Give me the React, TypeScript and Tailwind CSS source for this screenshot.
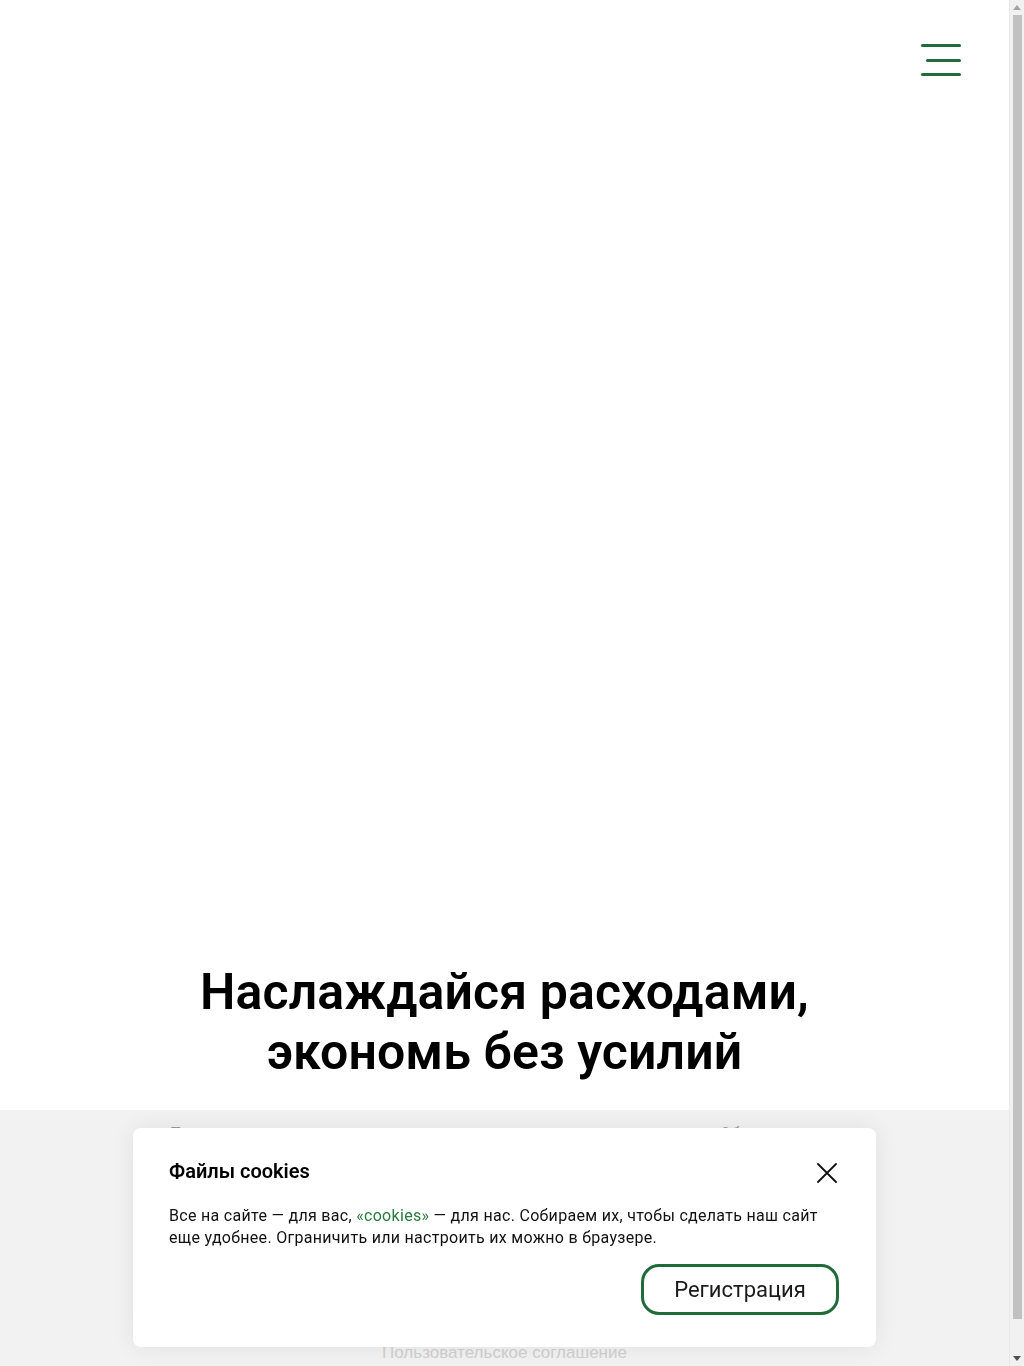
export default function App() {
  return (
    <div className="min-h-[1400px] w-[1009px] bg-white font-['Roboto','Noto_Sans',sans-serif] text-black">
      {/* Шапка */}
      <header className="flex h-[120px] justify-end pr-[48px] pt-[44px]">
        <button type="button" className="flex h-[32px] w-[40px] flex-col items-end justify-between">
          <span className="h-[3px] w-[40px] rounded-full bg-[#1f6b3a]" />
          <span className="h-[3px] w-[35px] rounded-full bg-[#1f6b3a]" />
          <span className="h-[3px] w-[40px] rounded-full bg-[#1f6b3a]" />
        </button>
      </header>

      {/* Промо */}
      <div className="h-[842px]" />
      <h1 className="pb-[28px] text-center text-[50px] leading-[60px] font-semibold tracking-[0.1px]">
        Наслаждайся расходами,
        <br />
        экономь без усилий
      </h1>

      {/* Подвал */}
      <footer className="h-[290px] bg-[#f2f2f2] pt-[12px]">
        <div className="flex pl-[170px] text-[16px] text-[#999]">
          <p className="w-[550px]">Продукты</p>
          <p>Обратная связь</p>
        </div>
        <p className="mt-[197px] text-center font-['Liberation_Sans',sans-serif] text-[17px] leading-[20px] text-[#d0d0d0]">
          Пользовательское соглашение
        </p>
      </footer>

      {/* Баннер cookies */}
      <div className="fixed bottom-[19px] left-[133px] flex h-[219px] w-[743px] flex-col rounded-lg bg-white pl-[36px] pr-[37px] pt-[29px] shadow-[0_0_24px_rgba(0,0,0,0.08)]">
        <div className="flex items-center justify-between">
          <h2 className="text-[20px] leading-[28px] font-semibold">Файлы cookies</h2>
          <svg className="mr-[2px] mt-[4px] h-[20px] w-[20px] text-[#111]" viewBox="0 0 20 20" fill="none" stroke="currentColor" strokeWidth={1.8} strokeLinecap="round">
            <path d="M1 1l18 18M19 1L1 19" />
          </svg>
        </div>
        <p className="mt-[20px] text-[16px] leading-[22px] tracking-[0.3px] text-[#111]">
          Все на сайте — для вас, <span className="text-[#2a7a3c]">«cookies»</span> — для нас. Собираем их, чтобы сделать наш сайт
          еще удобнее. Ограничить или настроить их можно в браузере.
        </p>
        <div className="mt-[15px] flex justify-end">
          <button
            type="button"
            className="h-[51px] w-[198px] rounded-[18px] border-[3px] border-[#1f6b3a] text-[22px] text-[#1a1a1a]"
          >
            Регистрация
          </button>
        </div>
      </div>

      {/* Полоса прокрутки */}
      <div className="fixed right-0 top-0 flex h-[1366px] w-[15px] flex-col items-center border-l border-[#e8e8e8] bg-[#f1f1f1]">
        <svg className="mt-[5px] h-[5px] w-[8px]" viewBox="0 0 8 5">
          <path d="M4 0L8 5H0z" fill="#a3a3a3" />
        </svg>
        <div className="mt-[5px] h-[1304px] w-[9px] bg-[#c1c1c1]" />
        <svg className="mt-[37px] h-[5px] w-[8px]" viewBox="0 0 8 5">
          <path d="M0 0h8L4 5z" fill="#505050" />
        </svg>
      </div>
    </div>
  )
}
